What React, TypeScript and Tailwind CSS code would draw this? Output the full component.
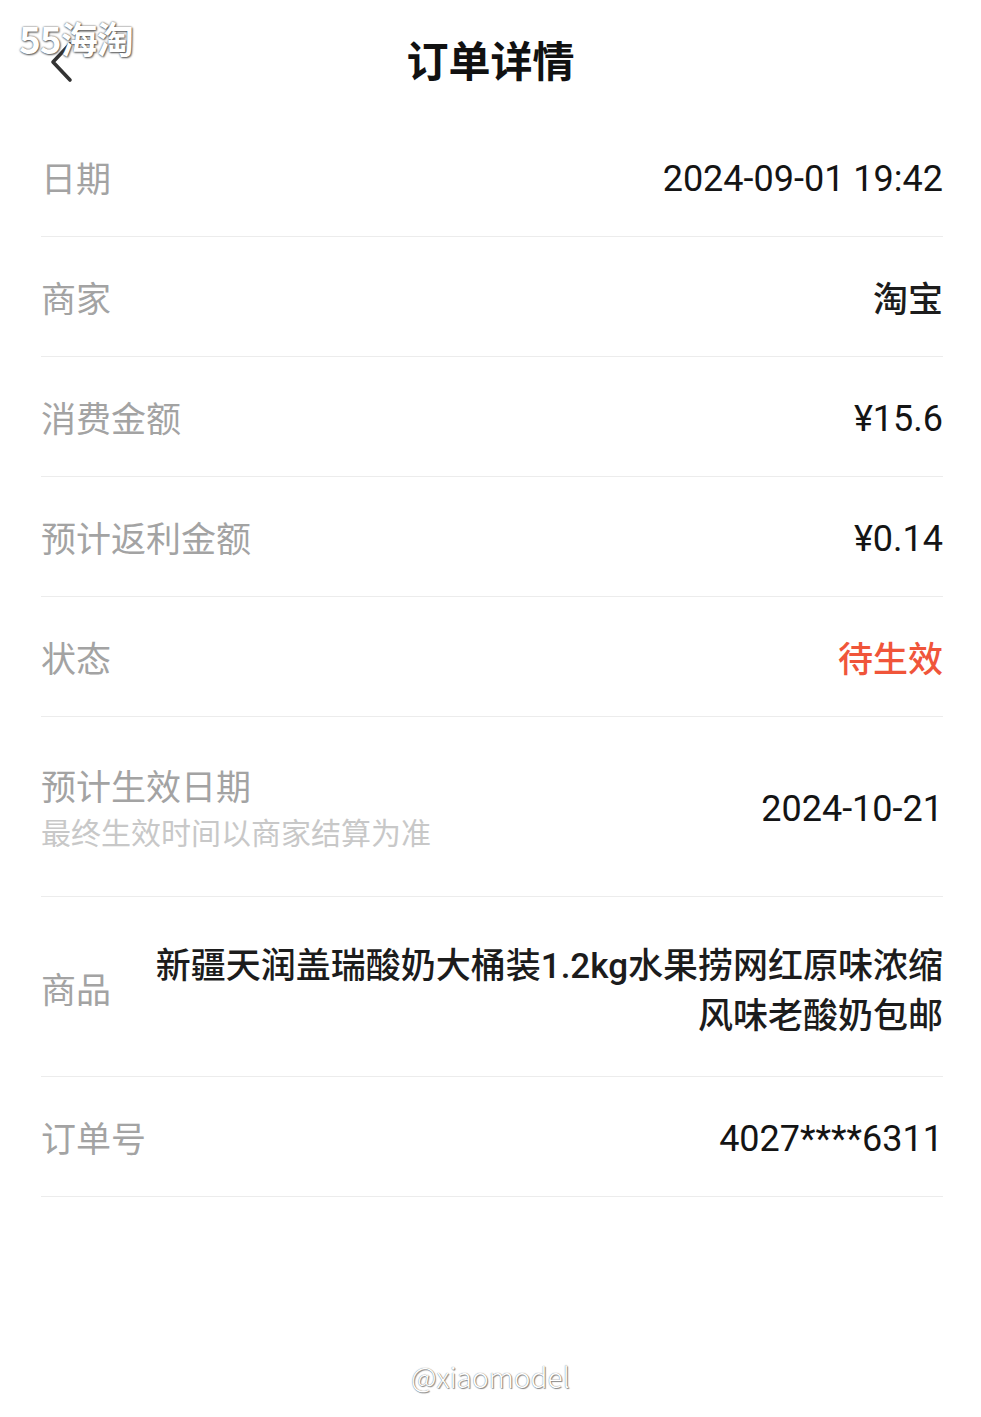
const cjk = { fontFamily: '"Noto Sans CJK SC", "Noto Sans", sans-serif' };
const num = { fontFamily: 'Roboto, "Noto Sans CJK SC", sans-serif' };

type Row = {
  label: string;
  value: string;
  red?: boolean;
  sub?: string;
  tall?: boolean;
  text?: boolean;
};

const rows: Row[] = [
  { label: '日期', value: '2024-09-01 19:42' },
  { label: '商家', value: '淘宝', text: true },
  { label: '消费金额', value: '¥15.6' },
  { label: '预计返利金额', value: '¥0.14' },
  { label: '状态', value: '待生效', red: true, text: true },
  { label: '预计生效日期', value: '2024-10-21', sub: '最终生效时间以商家结算为准', tall: true },
];

export default function App() {
  return (
    <div className="relative min-h-[1417px] w-full bg-white" style={cjk}>
      {/* 水印 */}
      <div className="absolute left-[19px] top-[20px] z-10 text-[37px] font-bold leading-none tracking-[-1px] text-white [text-shadow:0_0_2px_#444,1px_1px_2px_#666]">
        55海淘
      </div>

      {/* 顶部标题栏 */}
      <header className="relative flex h-[117px] items-start justify-center pt-[33px]">
        <button className="absolute left-[48px] top-[41px]">
          <svg width="26" height="42" viewBox="0 0 26 42" fill="none">
            <polyline
              points="22,3 5,21 22,39"
              stroke="#333"
              strokeWidth="3.6"
              strokeLinecap="round"
              strokeLinejoin="round"
            />
          </svg>
        </button>
        <h1 className="text-[42px] font-bold leading-[52px] text-[#111]">订单详情</h1>
      </header>

      <div className="ml-[41px] mr-[38px]">
        {rows.map((r) => (
          <div
            key={r.label}
            className={`flex items-center justify-between border-b border-[#ececec] ${r.tall ? 'h-[180px]' : 'h-[120px]'}`}
          >
            <div className="flex flex-col">
              <span className="text-[35px] leading-[44px] text-[#a3a3a3]">{r.label}</span>
              {r.sub && (
                <span className="mt-[4px] text-[30px] leading-[40px] text-[#c8c8c8]">{r.sub}</span>
              )}
            </div>
            {r.text ? (
              <span
                className={`text-[35px] font-medium leading-[44px] ${r.red ? 'text-[#f0553a]' : 'text-[#1c1c1c]'}`}
              >
                {r.value}
              </span>
            ) : (
              <span className="pt-[5px] text-[36px] leading-[44px] text-[#141414]" style={num}>
                {r.value}
              </span>
            )}
          </div>
        ))}

        <div className="flex h-[180px] items-center justify-between border-b border-[#ececec]">
          <span className="shrink-0 pt-[2px] text-[35px] leading-[44px] text-[#a3a3a3]">商品</span>
          <span
            className="w-[800px] pt-[10px] text-right text-[35px] font-medium leading-[50px] text-[#1c1c1c]"
            style={num}
          >
            新疆天润盖瑞酸奶大桶装1.2kg水果捞网红原味浓缩风味老酸奶包邮
          </span>
        </div>

        <div className="flex h-[120px] items-center justify-between border-b border-[#ececec]">
          <span className="text-[35px] leading-[44px] text-[#a3a3a3]">订单号</span>
          <span className="pt-[5px] text-[36px] leading-[44px] text-[#141414]" style={num}>
            4027****6311
          </span>
        </div>
      </div>

      {/* 底部水印 */}
      <div className="absolute left-0 right-0 top-[1362px] text-center text-[28px] font-light leading-none text-white [text-shadow:0_0_1px_#666,1px_1px_1px_#888]">
        @xiaomodel
      </div>
    </div>
  );
}
